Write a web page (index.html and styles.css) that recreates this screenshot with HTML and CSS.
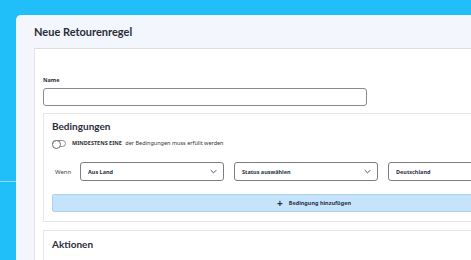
FILE: index.html
```html
<!DOCTYPE html>
<html lang="de">
<head>
    <meta charset="UTF-8">
    <title>Neue Retourenregel</title>
    <link rel="stylesheet" href="styles.css">
</head>
<body>
<div class="stage">
    <div class="panel">
        <div class="panel-head">Neue Retourenregel</div>
        <div class="panel-body">
            <!-- Name -->
            <div class="field">
                <label class="field-label">Name</label>
                <input class="field-input" type="text">
            </div>

            <!-- Bedingungen -->
            <div class="card">
                <h2 class="card-title">Bedingungen</h2>
                <div class="toggle-row">
                    <span class="toggle"></span>
                    <span class="toggle-text"><b>MINDESTENS EINE</b> der Bedingungen muss erfüllt werden</span>
                </div>
                <div class="cond-row">
                    <span class="cond-label">Wenn</span>
                    <div class="select">Aus Land
                        <svg class="chev" viewBox="0 0 10 6" width="7" height="5"><path d="M1 1l4 4 4-4" fill="none" stroke="#3a3f55" stroke-width="1.3"/></svg>
                    </div>
                    <div class="select">Status auswählen
                        <svg class="chev" viewBox="0 0 10 6" width="7" height="5"><path d="M1 1l4 4 4-4" fill="none" stroke="#3a3f55" stroke-width="1.3"/></svg>
                    </div>
                    <div class="select">Deutschland</div>
                </div>
                <button class="add-btn"><span class="plus">+</span> Bedingung hinzufügen</button>
            </div>

            <!-- Aktionen -->
            <div class="card card-actions">
                <h2 class="card-title">Aktionen</h2>
            </div>
        </div>
    </div>
</div>
</body>
</html>
```

FILE: styles.css
```css
* {
    margin: 0;
    padding: 0;
    box-sizing: border-box;
}

body {
    width: 471px;
    height: 260px;
    overflow: hidden;
    font-family: "Noto Sans", "Open Sans", sans-serif;
    color: #2c2d3a;
}

.stage {
    height: 260px;
    overflow: hidden;
    padding: 15px 0 0 16px;
    background: linear-gradient(#93dafb, #93dafb) 0 181px / 16px 1px no-repeat, #20bffa;
}

.panel {
    width: 455px;
    height: 245px;
    overflow: hidden;
    background: #f3f6fd;
    border-radius: 5px 0 0 0;
}

.panel-head {
    height: 33px;
    padding-left: 18px;
    display: flex;
    align-items: center;
    font-family: Lato, "Noto Sans", sans-serif;
    font-size: 11px;
    font-weight: 700;
    color: #2b2c38;
}

.panel-body {
    width: 620px;
    margin-left: 18px;
    height: 212px;
    background: #fff;
    border-top: 1px solid #dcdde6;
    border-left: 1px solid #e4e5ec;
    padding: 27px 0 0 8px;
}

.field {
    display: flex;
    flex-direction: column;
}

.field-label {
    font-size: 5.5px;
    font-weight: 700;
    line-height: 8px;
    margin-bottom: 4px;
}

.field-input {
    width: 324px;
    height: 18px;
    border: 1px solid #8a8a8e;
    border-radius: 3px;
    background: #fff;
}

.card {
    margin-top: 7px;
    border: 1px solid #e6e6ea;
    border-right: none;
    padding: 5px 0 8px 8px;
    height: 109px;
}

.card-title {
    font-family: Lato, "Noto Sans", sans-serif;
    font-size: 10px;
    font-weight: 700;
    line-height: 14px;
}

.toggle-row {
    display: flex;
    align-items: center;
    gap: 6px;
    margin-top: 6px;
    font-size: 5.5px;
    color: #333;
}

.toggle {
    width: 14px;
    height: 7px;
    border: 1px solid #8d8d92;
    border-radius: 4px;
    position: relative;
}

.toggle::before {
    content: '';
    position: absolute;
    left: -1px;
    top: -1px;
    width: 7px;
    height: 7px;
    border: 1px solid #6f6f75;
    border-radius: 50%;
    background: #fff;
}

.toggle-text b {
    font-weight: 700;
    margin-right: 2px;
}

.cond-row {
    display: flex;
    align-items: center;
    margin-top: 15px;
}

.cond-label {
    width: 28px;
    padding-left: 3px;
    font-size: 6px;
    color: #444;
}

.select {
    width: 144px;
    height: 19px;
    margin-right: 10px;
    border: 1px solid #7d7d82;
    border-radius: 3px;
    padding: 0 6px 0 7px;
    display: flex;
    align-items: center;
    justify-content: space-between;
    font-size: 5.5px;
    font-weight: 700;
    color: #28304a;
}

.add-btn {
    display: flex;
    align-items: center;
    justify-content: center;
    gap: 6px;
    width: 524px;
    height: 18px;
    margin-top: 13px;
    background: #c5e4fb;
    border: 1px solid #a9d3f3;
    border-radius: 2px;
    font-family: inherit;
    font-size: 5.5px;
    font-weight: 700;
    color: #2c3246;
}

.plus {
    font-size: 10px;
    font-weight: 700;
    line-height: 1;
}

.card-actions {
    margin-top: 8px;
    height: 60px;
    padding-top: 6px;
}
```
